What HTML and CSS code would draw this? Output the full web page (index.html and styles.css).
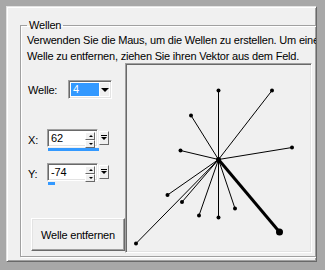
FILE: index.html
```html
<!DOCTYPE html>
<html lang="de">
  <head>
    <meta charset="UTF-8" />
    <title>Wellen</title>
    <link rel="stylesheet" href="styles.css">
  </head>
  <body>
    <div class="window">
      <div class="panel">
        <fieldset class="group">
          <legend>Wellen</legend>
          <p class="hint">Verwenden Sie die Maus, um die Wellen zu erstellen. Um eine<br>Welle zu entfernen, ziehen Sie ihren Vektor aus dem Feld.</p>
          <div class="content">
            <div class="controls">
              <div class="row row-welle">
                <span class="label">Welle:</span>
                <div class="combo">
                  <span class="combo-value">4</span>
                  <span class="combo-btn"><span class="tri"></span></span>
                </div>
              </div>
              <div class="row row-x">
                <span class="label short">X:</span>
                <div class="spin-wrap">
                  <div class="spin">
                    <div class="spin-field">62<span class="arrows"><span class="up"></span><span class="down"></span></span></div>
                    <span class="spin-btn"><span class="bar"></span><span class="tri small"></span></span>
                  </div>
                  <div class="level"><span class="fill" style="width: 51px"></span></div>
                </div>
              </div>
              <div class="row row-y">
                <span class="label short">Y:</span>
                <div class="spin-wrap">
                  <div class="spin">
                    <div class="spin-field">-74<span class="arrows"><span class="up"></span><span class="down"></span></span></div>
                    <span class="spin-btn"><span class="bar"></span><span class="tri small"></span></span>
                  </div>
                  <div class="level"><span class="fill" style="width: 7px"></span></div>
                </div>
              </div>
              <button class="btn">Welle entfernen</button>
            </div>
            <div class="canvas">
              <svg width="183" height="186" viewBox="129 66 183 186">
                <g stroke="#000" stroke-width="1" fill="none">
                  <line x1="219.5" y1="159.5" x2="219.5" y2="90.5" />
                  <line x1="219.5" y1="159.5" x2="273" y2="90.5" />
                  <line x1="219.5" y1="159.5" x2="192" y2="115.5" />
                  <line x1="219.5" y1="159.5" x2="181.5" y2="150.5" />
                  <line x1="219.5" y1="159.5" x2="293" y2="147.5" />
                  <line x1="219.5" y1="159.5" x2="168.5" y2="195" />
                  <line x1="219.5" y1="159.5" x2="183" y2="202" />
                  <line x1="219.5" y1="159.5" x2="200" y2="215.5" />
                  <line x1="219.5" y1="159.5" x2="219.5" y2="217.5" />
                  <line x1="219.5" y1="159.5" x2="236" y2="208.5" />
                  <line x1="219.5" y1="159.5" x2="137" y2="243.5" />
                  <line x1="219.5" y1="159.5" x2="280.5" y2="232" stroke-width="3" />
                </g>
                <g fill="#000">
                  <circle cx="219.5" cy="159.5" r="2.5" />
                  <circle cx="219.5" cy="90.5" r="2" />
                  <circle cx="273" cy="90.5" r="2" />
                  <circle cx="192" cy="115.5" r="2" />
                  <circle cx="181.5" cy="150.5" r="2" />
                  <circle cx="293" cy="147.5" r="2" />
                  <circle cx="168.5" cy="195" r="2" />
                  <circle cx="183" cy="202" r="2" />
                  <circle cx="200" cy="215.5" r="2" />
                  <circle cx="219.5" cy="217.5" r="2" />
                  <circle cx="236" cy="208.5" r="2" />
                  <circle cx="137" cy="243.5" r="2" />
                  <circle cx="280.5" cy="232" r="3.5" />
                </g>
              </svg>
            </div>
          </div>
        </fieldset>
      </div>
    </div>
  </body>
</html>
```

FILE: styles.css
```css
body {
  margin: 0;
  font-family: "Liberation Sans", Arial, sans-serif;
  font-size: 11px;
  letter-spacing: -0.2px;
  color: #000;
  background: #a8a8a8;
}
.window {
  width: 325px;
  height: 270px;
  box-sizing: border-box;
  padding: 6px 8px 8px 6px;
  background: #a8a8a8;
}
.panel {
  height: 100%;
  box-sizing: border-box;
  background: #f0f0f0;
  border-top: 1px solid #e3e3e3;
  border-left: 1px solid #e3e3e3;
  border-right: 1px solid #696969;
  border-bottom: 1px solid #696969;
  box-shadow: inset 1px 1px 0 #fff, inset -1px -1px 0 #a0a0a0;
  padding: 12px 0 0 13px;
  overflow: hidden;
}
.group {
  margin: 0;
  width: 330px;
  height: 238px;
  box-sizing: border-box;
  padding: 0 0 0 6px;
  border: 1px solid #a0a0a0;
  box-shadow: 1px 1px 0 #fff, inset 1px 1px 0 #fff;
}
.group legend {
  padding: 0 2px;
  line-height: 13px;
}
.hint {
  margin: 0;
  line-height: 16px;
  white-space: nowrap;
}
.content {
  display: flex;
}
.controls {
  width: 98px;
  display: flex;
  flex-direction: column;
}
.row {
  display: flex;
  align-items: flex-start;
}
.label {
  width: 40px;
  padding-left: 1px;
}
.label.short {
  width: 19px;
}
.row-welle {
  margin-top: 16px;
}
.row-welle .label {
  padding-top: 4px;
}
.row-x {
  margin-top: 30px;
}
.row-y {
  margin-top: 12px;
}
.row-x .label,
.row-y .label {
  padding-top: 5px;
}
.combo {
  width: 44px;
  height: 19px;
  box-sizing: border-box;
  display: flex;
  background: #fff;
  border-top: 1px solid #a0a0a0;
  border-left: 1px solid #a0a0a0;
  border-right: 1px solid #fff;
  border-bottom: 1px solid #fff;
  box-shadow: inset 1px 1px 0 #696969, inset -1px -1px 0 #e3e3e3;
  padding: 2px;
}
.combo-value {
  width: 26px;
  background: #3399ff;
  color: #fff;
  padding-left: 2px;
  line-height: 13px;
}
.combo-btn {
  flex: 1;
  background: #f0f0f0;
  display: flex;
  align-items: center;
  justify-content: center;
  margin-left: 1px;
}
.tri {
  width: 0;
  height: 0;
  border-left: 4px solid transparent;
  border-right: 4px solid transparent;
  border-top: 4px solid #000;
}
.tri.small {
  border-left-width: 3px;
  border-right-width: 3px;
  border-top-width: 3px;
}
.spin {
  display: flex;
  align-items: flex-start;
}
.spin-field {
  position: relative;
  width: 51px;
  height: 18px;
  box-sizing: border-box;
  background: #fff;
  border-top: 1px solid #a0a0a0;
  border-left: 1px solid #a0a0a0;
  border-right: 1px solid #fff;
  border-bottom: 1px solid #fff;
  box-shadow: inset 1px 1px 0 #696969, inset -1px -1px 0 #e3e3e3;
  padding: 2px 0 0 3px;
  line-height: 13px;
}
.arrows {
  position: absolute;
  top: 2px;
  right: 2px;
  width: 10px;
  display: flex;
  flex-direction: column;
}
.arrows span {
  height: 6px;
  background: #f0f0f0;
  border: 1px solid;
  border-color: #fff #696969 #696969 #fff;
  position: relative;
}
.arrows span::after {
  content: "";
  position: absolute;
  left: 3px;
  top: 2px;
  border-left: 2px solid transparent;
  border-right: 2px solid transparent;
}
.arrows .up::after {
  border-bottom: 2px solid #000;
}
.arrows .down::after {
  border-top: 2px solid #000;
}
.spin-btn {
  width: 10px;
  height: 14px;
  margin: 2px 0 0 1px;
  box-sizing: border-box;
  background: #f0f0f0;
  border: 1px solid;
  border-color: #fff #696969 #696969 #fff;
  display: flex;
  flex-direction: column;
  align-items: center;
  padding-top: 3px;
}
.spin-btn .bar {
  width: 6px;
  height: 1px;
  background: #000;
  margin-bottom: 1px;
}
.level {
  height: 3px;
  margin: 1px 0 0 1px;
}
.fill {
  display: block;
  height: 3px;
  background: #3399ff;
}
.btn {
  margin: 33px 0 0 4px;
  width: 94px;
  height: 33px;
  padding: 0;
  font: inherit;
  letter-spacing: inherit;
  color: #000;
  background: #f0f0f0;
  border: 1px solid;
  border-color: #fff #696969 #696969 #fff;
  box-shadow: inset -1px -1px 0 #a0a0a0, inset 1px 1px 0 #e3e3e3;
}
.canvas {
  margin-top: -1px;
  width: 187px;
  height: 190px;
  box-sizing: border-box;
  border-top: 1px solid #a0a0a0;
  border-left: 1px solid #a0a0a0;
  border-right: 1px solid #fff;
  border-bottom: 1px solid #fff;
  box-shadow: inset 1px 1px 0 #696969, inset -1px -1px 0 #e3e3e3;
  padding: 2px;
  background: #f0f0f0;
}
.canvas svg {
  display: block;
}
```
